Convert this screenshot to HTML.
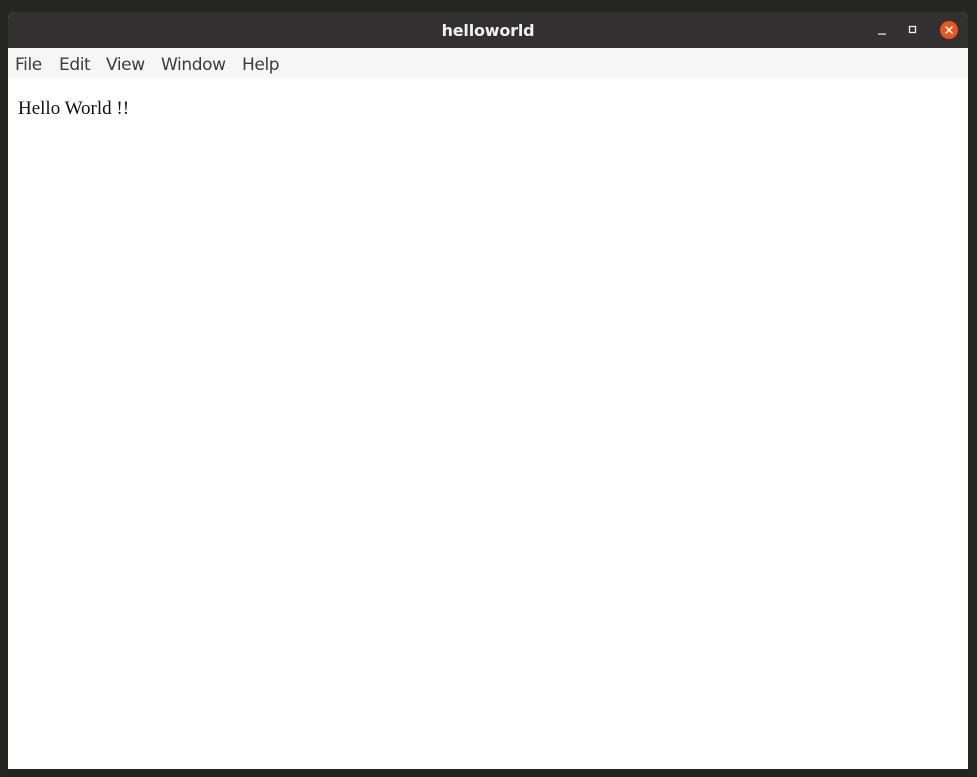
<!DOCTYPE html>
<html><head><style>
html,body{margin:0;width:977px;height:777px;background:#242420;overflow:hidden}
.win{position:absolute;left:8px;top:12px;width:960px;height:757px;background:#fff;border-radius:7px 7px 0 0;overflow:hidden}
.title{height:36px;background:#323031;color:#f0f0f0;font:bold 16px "DejaVu Sans","Liberation Sans",sans-serif;text-align:center;line-height:38px;position:relative;letter-spacing:-0.2px}
.menu{height:30px;background:#f6f6f6;font:17px "DejaVu Sans","Liberation Sans",sans-serif;color:#3c3c3c;position:relative;letter-spacing:-0.4px}
.menu span{position:absolute;top:7px}
.content{font:19px "Liberation Serif",serif;color:#111;padding:20px 0 0 10px}
</style></head><body>
<div class="win">
<div class="title">helloworld
<svg style="position:absolute;left:860px;top:8px" width="100" height="22">
<rect x="10" y="13.5" width="8" height="1.2" fill="#eee"/>
<rect x="41.5" y="6.5" width="6" height="6" fill="none" stroke="#eee" stroke-width="1.3"/>
<circle cx="81" cy="10" r="9" fill="#e95420"/>
<path d="M77.5 6.5L84.5 13.5M84.5 6.5L77.5 13.5" stroke="#fff" stroke-width="1.5"/>
</svg>
</div>
<div class="menu"><span style="left:7px">File</span><span style="left:51px">Edit</span><span style="left:98px">View</span><span style="left:153px">Window</span><span style="left:234px">Help</span></div>
<div class="content">Hello World !!</div>
</div>
</body></html>
